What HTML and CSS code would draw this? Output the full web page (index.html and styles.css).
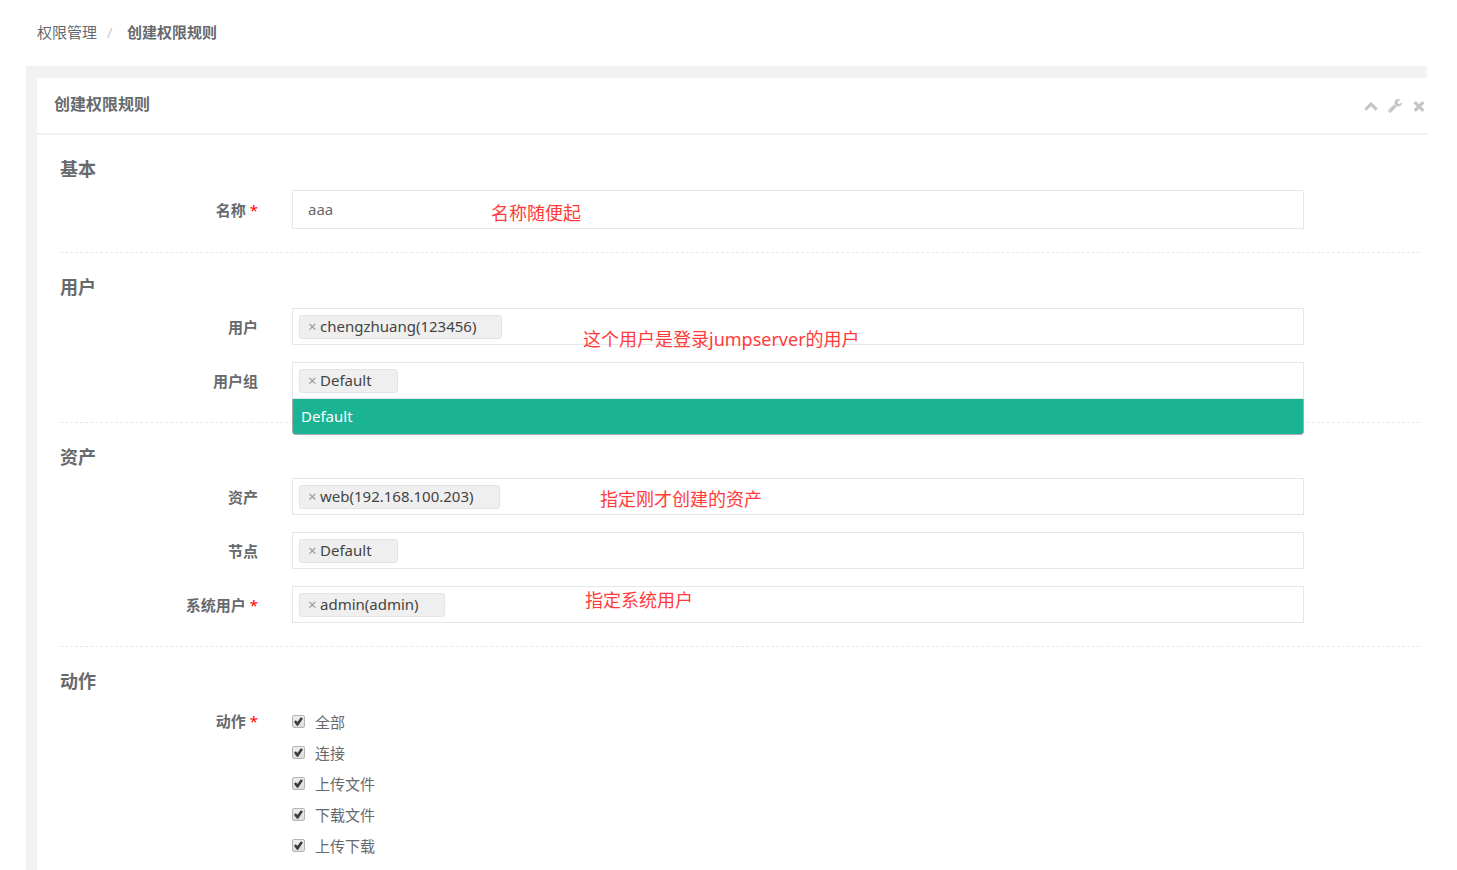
FILE: index.html
```html
<!DOCTYPE html>
<html lang="zh-CN">
<head>
<meta charset="utf-8">
<title>创建权限规则</title>
<link rel="stylesheet" href="styles.css">
</head>
<body>
<nav class="breadcrumb" aria-label="breadcrumb">
  <a href="#">权限管理</a>
  <span class="sep">/</span>
  <strong>创建权限规则</strong>
</nav>
<main class="wrapper">
  <section class="panel">
    <header class="panel-head">
      <h1>创建权限规则</h1>
      <div class="tools">
        <button type="button" aria-label="折叠"><svg width="14" height="14" viewBox="0 0 14 14"><path d="M1.400 10.600 7 5 12.600 10.600" fill="none" stroke="currentColor" stroke-width="3"/></svg></button>
        <button type="button" aria-label="设置"><svg width="14" height="14" viewBox="0 0 1664 1664"><path fill="currentColor" d="M384 1344q0-26-19-45t-45-19-45 19-19 45 19 45 45 19 45-19 19-45zm644-420L346 1606q-37 37-90 37-52 0-91-37L59 1498q-38-36-38-90 0-53 38-91l681-681q39 98 114.500 173.500T1028 924zm634-435q0 39-23 106-47 134-164.500 217.500T1216 896q-185 0-316.500-131.500T768 448t131.500-316.500T1216 0q58 0 121.500 16.500T1445 63q16 11 16 28t-16 28L1152 288v224l193 107q5-3 79-48.500t135.500-81T1630 454q15 0 23.500 10t8.500 25z"/></svg></button>
        <button type="button" aria-label="关闭"><svg width="14" height="14" viewBox="0 0 14 14"><path d="M2.700 3.200 11.300 11.800M11.300 3.200 2.700 11.800" fill="none" stroke="currentColor" stroke-width="3.200"/></svg></button>
      </div>
    </header>
    <form class="form">
      <fieldset>
        <h2>基本</h2>
        <div class="row">
          <label class="name" for="name">名称 <i>*</i></label>
          <div class="field">
            <input class="text" id="name" type="text" value="aaa">
            <span class="note note-name">名称随便起</span>
          </div>
        </div>
      </fieldset>
      <fieldset>
        <h2>用户</h2>
        <div class="row">
          <label class="name" for="users">用户</label>
          <div class="field">
            <div class="multi"><span class="chip"><button type="button" aria-label="移除">×</button>chengzhuang(123456)</span><input id="users" type="text"></div>
            <span class="note note-user">这个用户是登录jumpserver的用户</span>
          </div>
        </div>
        <div class="row">
          <label class="name" for="groups">用户组</label>
          <div class="field">
            <div class="multi"><span class="chip"><button type="button" aria-label="移除">×</button>Default</span><input id="groups" type="text"></div>
            <ul class="menu" role="listbox" aria-label="用户组"><li role="option" aria-selected="true">Default</li></ul>
          </div>
        </div>
      </fieldset>
      <fieldset>
        <h2>资产</h2>
        <div class="row">
          <label class="name" for="assets">资产</label>
          <div class="field">
            <div class="multi"><span class="chip"><button type="button" aria-label="移除">×</button>web(192.168.100.203)</span><input id="assets" type="text"></div>
            <span class="note note-asset">指定刚才创建的资产</span>
          </div>
        </div>
        <div class="row">
          <label class="name" for="nodes">节点</label>
          <div class="field">
            <div class="multi"><span class="chip"><button type="button" aria-label="移除">×</button>Default</span><input id="nodes" type="text"></div>
          </div>
        </div>
        <div class="row">
          <label class="name" for="sysusers">系统用户 <i>*</i></label>
          <div class="field">
            <div class="multi"><span class="chip"><button type="button" aria-label="移除">×</button>admin(admin)</span><input id="sysusers" type="text"></div>
            <span class="note note-sys">指定系统用户</span>
          </div>
        </div>
      </fieldset>
      <fieldset>
        <h2>动作</h2>
        <div class="row row-top">
          <span class="name" id="actions">动作 <i>*</i></span>
          <div class="field checks" role="group" aria-labelledby="actions">
            <label><input type="checkbox" checked>全部</label>
            <label><input type="checkbox" checked>连接</label>
            <label><input type="checkbox" checked>上传文件</label>
            <label><input type="checkbox" checked>下载文件</label>
            <label><input type="checkbox" checked>上传下载</label>
          </div>
        </div>
      </fieldset>
    </form>
  </section>
</main>
</body>
</html>
```

FILE: styles.css
```css
* { box-sizing: border-box; }
body {
  margin: 0;
  min-height: 100vh;
  display: flex;
  flex-direction: column;
  background: #fff;
  color: #676a6c;
  font: 15px/20px "Noto Sans", "Noto Sans CJK SC", sans-serif;
}
button, input { font: inherit; color: inherit; }
button { padding: 0; border: 0; background: none; cursor: pointer; }

.breadcrumb { display: flex; height: 66px; padding: 22px 37px; }
.breadcrumb a { color: inherit; text-decoration: none; }
.breadcrumb .sep { width: 30px; padding-left: 10px; color: #ccc; }
.breadcrumb strong { font-weight: 600; }

.wrapper {
  flex: 1;
  display: flex;
  margin: 0 30px 0 26px;
  padding: 12px 0 0 11px;
  background: #f2f2f2;
}
.panel { flex: 1; background: #fff; }
.panel-head {
  display: flex;
  justify-content: space-between;
  align-items: center;
  height: 57px;
  padding: 0 1px 4px 17px;
  border-bottom: 2px solid #f2f2f2;
}
.panel-head h1 { margin: 0; font-size: 16px; font-weight: 600; }
.tools { display: flex; gap: 10px; padding-top: 5px; color: #c4c4c4; }
.tools button, .tools svg { display: block; }

.form { padding: 0 7px 0 23px; }
fieldset { min-width: 0; margin: 0; padding: 24px 0 23px; border: 0; border-bottom: 1px dashed #e7eaec; }
fieldset:last-child { border: 0; padding-bottom: 0; }
h2 { margin: 0 0 11px; font-size: 18px; line-height: 20px; font-weight: 600; }

.row {
  display: grid;
  grid-template-columns: minmax(0, 2fr) minmax(0, 9fr) minmax(0, 1fr);
  align-items: center;
  margin: 0 -16px;
}
.row + .row { margin-top: 17px; }
.row-top { align-items: start; padding-top: 4px; }
.name { padding-right: 18px; text-align: right; font-weight: 600; }
.row-top .name { line-height: 31px; }
.name i { color: #f00; font-style: normal; font-weight: 400; }
.field { position: relative; margin: 0 16px; }

.text {
  display: block;
  width: 100%;
  height: 39px;
  padding: 0 15px 2px;
  border: 1px solid #e5e6e7;
  border-radius: 1px;
  outline: 0;
}
.multi {
  display: flex;
  align-items: center;
  height: 37px;
  padding: 0 6px;
  border: 1px solid #e5e6e7;
}
.multi input { flex: 1; min-width: 0; border: 0; outline: 0; background: none; }
.chip {
  display: flex;
  align-items: center;
  height: 24px;
  padding: 0 25px 2px 8px;
  border: 1px solid #e4e4e4;
  border-radius: 3px;
  background: #efefef;
  color: #444;
}
.chip button { width: 12px; text-align: left; color: #999; }
.menu {
  position: absolute;
  z-index: 1;
  top: 100%;
  left: 0;
  right: 0;
  margin: 0;
  padding: 0;
  list-style: none;
  border: 1px solid #aaa;
  border-top: 0;
  border-radius: 0 0 4px 4px;
  background: #1ab394;
  color: #fff;
}
.menu li { padding: 7px 8px 8px; }

.note { position: absolute; font-size: 18px; line-height: 24px; color: #ff3b3b; white-space: nowrap; }
.note-name { left: 199px; top: 11px; }
.note-user { left: 291px; top: 19px; }
.note-asset { left: 308px; top: 9px; }
.note-sys { left: 293px; top: 2px; }

.checks label { display: flex; align-items: center; gap: 10px; width: max-content; height: 31px; }
.checks input {
  appearance: none;
  display: grid;
  place-items: center;
  width: 13px;
  height: 13px;
  margin: 0;
  border: 1px solid #b4b4b4;
  border-radius: 2px;
  background: linear-gradient(#eee, #ddd);
}
.checks input:checked::before {
  content: "";
  width: 9px;
  height: 9px;
  background: #3c3c3c;
  clip-path: polygon(0 52%, 20% 36%, 38% 56%, 76% 4%, 100% 18%, 46% 98%, 32% 98%);
}
```
